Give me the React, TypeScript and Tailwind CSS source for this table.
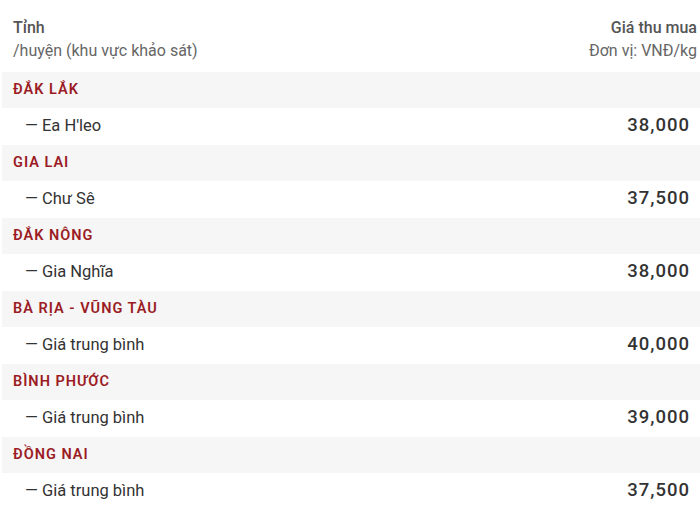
const groups = [
  { name: "Đắk Lắk", item: "Ea H'leo", price: "38,000" },
  { name: "Gia Lai", item: "Chư Sê", price: "37,500" },
  { name: "Đắk Nông", item: "Gia Nghĩa", price: "38,000" },
  { name: "Bà Rịa - Vũng Tàu", item: "Giá trung bình", price: "40,000" },
  { name: "Bình Phước", item: "Giá trung bình", price: "39,000" },
  { name: "Đồng Nai", item: "Giá trung bình", price: "37,500" },
];

export default function App() {
  return (
    <div className="w-[700px] h-[508px] overflow-hidden bg-white pl-[2px] font-['Roboto',sans-serif]">
      {/* Header */}
      <div className="flex justify-between h-[72px] pt-[16px] pl-[11px] pr-[3px] text-[16px] leading-[23px] text-[#666]">
        <div>
          <div className="font-medium text-[#555]">Tỉnh</div>
          <div>/huyện (khu vực khảo sát)</div>
        </div>
        <div className="text-right">
          <div className="font-medium text-[#555]">Giá thu mua</div>
          <div>Đơn vị: VNĐ/kg</div>
        </div>
      </div>

      {/* Rows */}
      {groups.map((g) => (
        <div key={g.name}>
          <div className="h-[36px] bg-[#f6f6f6] flex items-center pl-[11px] text-[14.5px] font-semibold uppercase tracking-[1px] text-[#9b1c24]">
            {g.name}
          </div>
          <div className="h-[37px] flex items-center justify-between pl-[23px] pr-[10px]">
            <span className="text-[16.5px] text-[#333]">— {g.item}</span>
            <span className="text-[18.5px] font-medium tracking-[1px] text-[#333] -mt-[2px]">{g.price}</span>
          </div>
        </div>
      ))}
    </div>
  );
}
